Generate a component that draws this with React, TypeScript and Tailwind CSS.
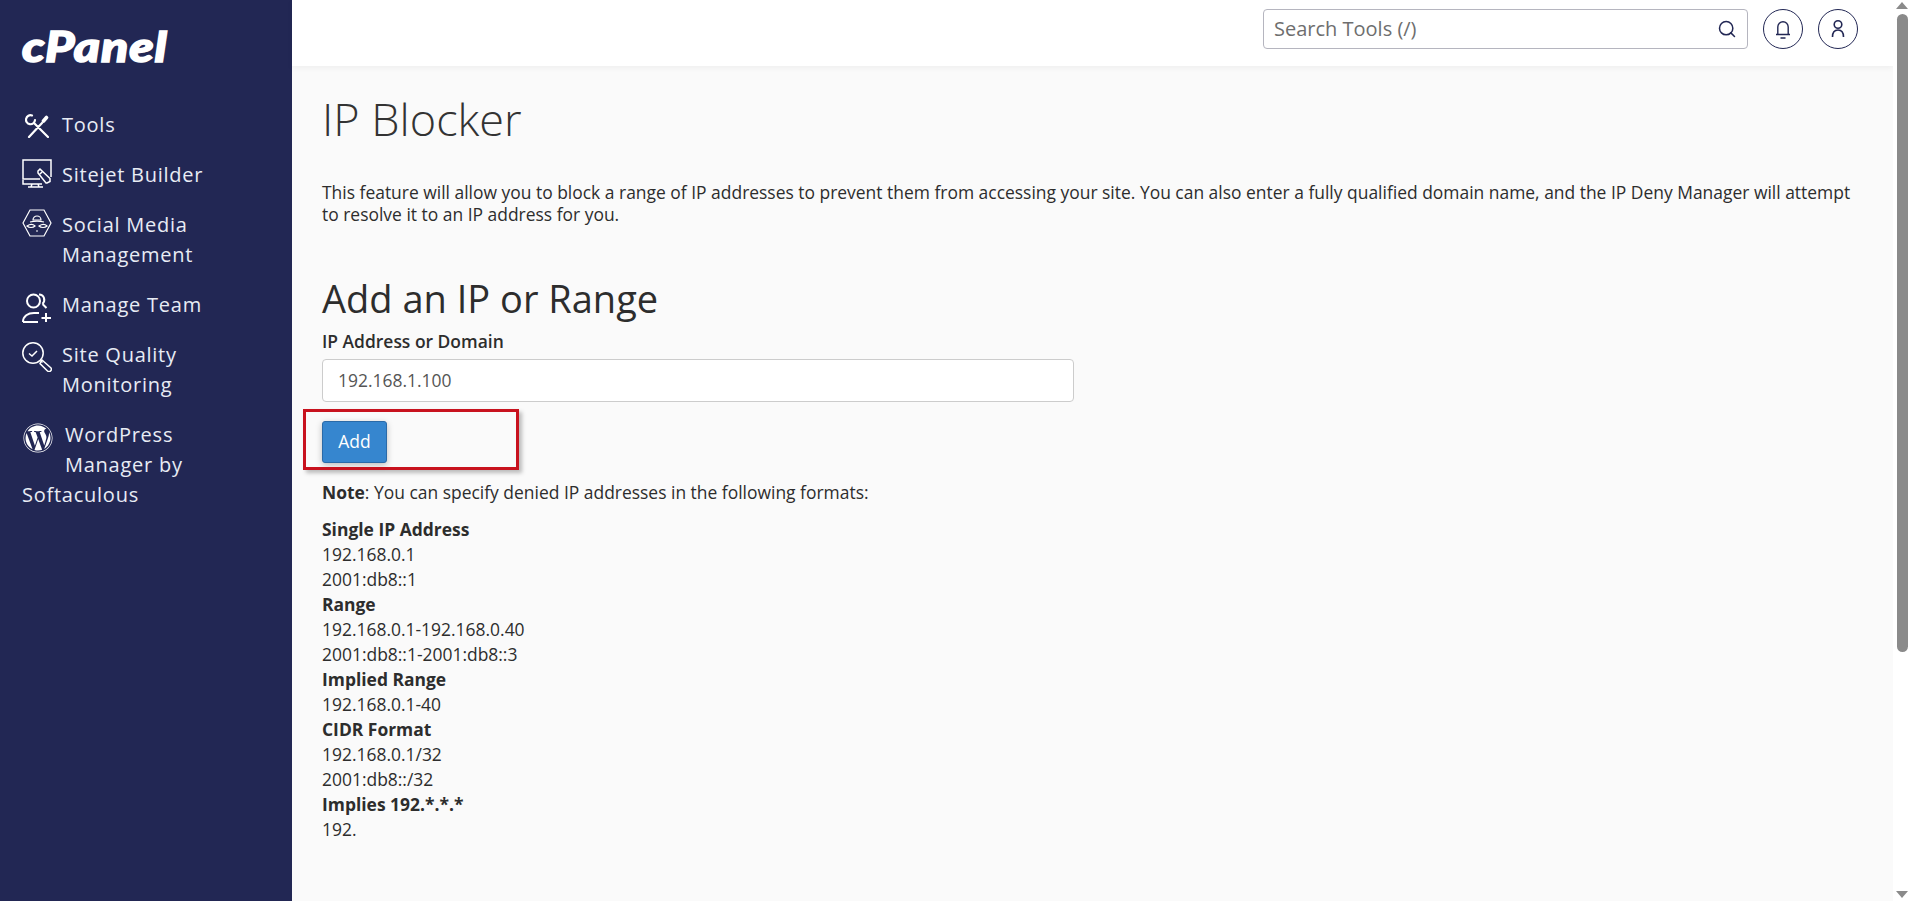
import React from "react";
import { Search } from "lucide-react";
import { FaWordpress } from "react-icons/fa";

const Lbl = ({ children }: { children: React.ReactNode }) => <div className="font-bold">{children}</div>;

export default function App() {
  return (
    <div className="flex h-[901px] w-full overflow-hidden bg-[#fafafa] font-['Open_Sans',sans-serif] text-[#2d2d2d]">
      <aside className="w-[292px] shrink-0 bg-[#222754] text-[#e8ecf4] text-[20px] leading-[30px] tracking-[0.75px] pl-[22px] pr-[20px]">
        <div className="h-[110px] pt-[21px] font-['Lato',sans-serif] italic font-black text-white text-[42px] leading-[50px] origin-left scale-x-[1.19] [-webkit-text-stroke:1.5px_white]">cPanel</div>
        <nav className="flex flex-col gap-[20px]">
          <div className="flex h-[30px]">
            <div className="w-[40px]">
              <svg width="24" height="24" viewBox="0 0 24 24" fill="none" stroke="white" strokeWidth="2.2" strokeLinecap="round" className="ml-[3px] mt-[4px]">
                <path d="M7 1.500A4.500 4.500 0 1 0 10 6M9.500 9.500 23 23M4 23 17 9" />
                <path d="M18.500 7 21.500 3.500" strokeWidth="3.6" />
              </svg>
            </div>
            <span>Tools</span>
          </div>
          <div className="flex h-[30px]">
            <div className="w-[40px]">
              <svg width="30" height="29" viewBox="0 0 30 29" fill="none" stroke="white" strokeWidth="1.5" className="mt-[-1px]">
                <path d="M18 20H1V1h28v17M1 21v4h19M10 25l-1 3M16 25l1 3M6 28h15" />
                <path d="M16 12l2-2 10 9.500v3l-3 1.500h-1L16 14zM18 15l2-2" />
              </svg>
            </div>
            <span>Sitejet Builder</span>
          </div>
          <div className="flex">
            <div className="w-[40px]">
              <svg width="30" height="28" viewBox="0 0 30 28" fill="none" stroke="white" strokeWidth="1.2" className="mt-[-1px]">
                <path d="M8 1h14l7 13-7 13H8L1 14z" />
                <path d="M11 11a4 4 0 0 1 8 0z" />
                <path d="M8 13c4-1 10-1 14 0M5 17c3-2 6-2 8 0-2 2-6 2-8 0zM17 17c3-2 6-2 8 0-2 2-6 2-8 0zM14 22h2" />
              </svg>
            </div>
            <span>Social Media<br />Management</span>
          </div>
          <div className="flex h-[30px]">
            <div className="w-[40px]">
              <svg width="30" height="30" viewBox="0 0 30 30" fill="none" stroke="white" strokeWidth="2" className="mt-[3px]">
                <circle cx="11.500" cy="8" r="6.500" />
                <path d="M17 1.500c5 0 7 6 3.500 9.500M20.500 11l4 4M1 29c0-6 5-9 11-9h5M1 29h15M24 20v9M19.500 25h9.500" />
              </svg>
            </div>
            <span>Manage Team</span>
          </div>
          <div className="flex">
            <div className="w-[40px]">
              <svg width="30" height="30" viewBox="0 0 30 30" fill="none" stroke="white" strokeWidth="1.5" className="mt-[2px]">
                <circle cx="11" cy="11" r="10.200" />
                <path d="M7 11.500l3 2.500 5-5M18.500 18.500l2 2" />
                <path d="M20 18l8.500 7.500a2 2 0 0 1-3 3.500L18 21.500z" />
              </svg>
            </div>
            <span>Site Quality<br />Monitoring</span>
          </div>
          <div className="mt-[0px]">
            <FaWordpress className="float-left mr-[12px] mt-[3px] ml-[1px] mb-[26px] h-[30px] w-[30px] text-white" />
            <span>WordPress<br />Manager by<br />Softaculous</span>
          </div>
        </nav>
      </aside>

      <div className="flex min-w-0 flex-1 flex-col">
        <header className="flex h-[66px] shrink-0 items-start justify-end bg-white pt-[9px] pr-[35px] shadow-[0_2px_6px_rgba(0,0,0,0.05)]">
          <div className="flex h-[40px] w-[485px] items-center justify-between rounded-[4px] border border-[#b5b5bf] bg-white pl-[10px] pr-[10px] text-[#6e6e6e] text-[20px]">
            <span>Search Tools (/)</span>
            <Search size={20} strokeWidth={1.8} className="text-[#222754]" />
          </div>
          <div className="ml-[15px] flex h-[40px] w-[40px] items-center justify-center rounded-full border border-[#222754]">
            <svg width="16" height="19" viewBox="0 0 16 19" fill="none" stroke="#222754" strokeWidth="1.4">
              <path d="M1 14.500h14M2.800 14.500V7a5.200 5.200 0 0 1 10.400 0v7.500M5.500 18h5" />
            </svg>
          </div>
          <div className="ml-[15px] flex h-[40px] w-[40px] items-center justify-center rounded-full border border-[#222754]">
            <svg width="16" height="20" viewBox="0 0 16 20" fill="none" stroke="#222754" strokeWidth="1.6">
              <circle cx="8" cy="5.500" r="3.800" />
              <path d="M2.500 18c0-4.500 2-7 5.500-7s5.500 2.500 5.500 7" />
            </svg>
          </div>
        </header>
        <main className="flex-1 pl-[30px] pr-[35px] text-[17.45px] leading-[25px]">
          <h1 className="mt-[26px] text-[45px] font-light leading-[54px] text-[#333]">IP Blocker</h1>
          <p className="mt-[35px] leading-[22px]">This feature will allow you to block a range of IP addresses to prevent them from accessing your site. You can also enter a fully qualified domain name, and the IP Deny Manager will attempt to resolve it to an IP address for you.</p>
          <h2 className="mt-[49px] text-[38px] leading-[48px] font-medium">Add an IP or Range</h2>
          <label className="mt-[7px] block font-semibold leading-[24px]">IP Address or Domain</label>
          <div className="mt-[6px] flex h-[43px] w-[752px] items-center rounded-[4px] border border-[#ccc] bg-white px-[15px] text-[#555]">192.168.1.100</div>
          <div className="relative mt-[19px] w-fit">
            <div className="flex h-[42px] w-[65px] items-center justify-center rounded-[3px] border border-[#2a6aa8] bg-[#3686cf] pb-[1px] text-white shadow-[0_2px_6px_rgba(0,0,0,0.25)]">Add</div>
            <div className="absolute -left-[19px] -top-[12px] h-[61px] w-[216px] border-[3px] border-[#c8121e] shadow-[3px_3px_4px_rgba(0,0,0,0.25)]" />
          </div>
          <p className="mt-[17px]"><b className="font-bold">Note</b>: You can specify denied IP addresses in the following formats:</p>
          <div className="mt-[12px]">
            <Lbl>Single IP Address</Lbl>
            <div>192.168.0.1</div>
            <div>2001:db8::1</div>
            <Lbl>Range</Lbl>
            <div>192.168.0.1-192.168.0.40</div>
            <div>2001:db8::1-2001:db8::3</div>
            <Lbl>Implied Range</Lbl>
            <div>192.168.0.1-40</div>
            <Lbl>CIDR Format</Lbl>
            <div>192.168.0.1/32</div>
            <div>2001:db8::/32</div>
            <Lbl>Implies 192.*.*.*</Lbl>
            <div>192.</div>
          </div>
        </main>
      </div>

      <div className="flex w-[18px] shrink-0 flex-col items-center bg-white pt-[2px] pb-[3px]">
        <div className="h-0 w-0 border-x-[6px] border-b-[7px] border-x-transparent border-b-[#8a8a8a]" />
        <div className="mt-[5px] h-[638px] w-[11px] rounded-full bg-[#8a8a8a]" />
        <div className="flex-1" />
        <div className="h-0 w-0 border-x-[6px] border-t-[7px] border-x-transparent border-t-[#8a8a8a]" />
      </div>
    </div>
  );
}
